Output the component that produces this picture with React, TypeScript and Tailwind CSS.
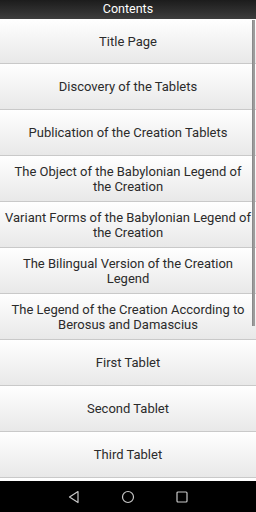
import React from "react";

const items = [
  "Title Page",
  "Discovery of the Tablets",
  "Publication of the Creation Tablets",
  "The Object of the Babylonian Legend of the Creation",
  "Variant Forms of the Babylonian Legend of the Creation",
  "The Bilingual Version of the Creation Legend",
  "The Legend of the Creation According to Berosus and Damascius",
  "First Tablet",
  "Second Tablet",
  "Third Tablet",
  "Fourth Tablet",
];

export default function App() {
  return (
    <div className="w-[256px] h-[512px] flex flex-col bg-white overflow-hidden font-['Roboto',sans-serif]">
      {/* Header */}
      <div className="h-[19px] shrink-0 flex items-center justify-center bg-gradient-to-b from-[#1c1c1c] to-[#3e3e3e] text-white text-[12.5px] font-normal leading-none">
        Contents
      </div>

      {/* List */}
      <div className="relative flex-1 overflow-hidden">
        {items.map((t, i) => (
          <div
            key={t}
            className={
              (i === 0 ? "h-[45px] " : "h-[46px] ") +
              "flex items-center justify-center px-1 border-b border-[#c9c9c9] bg-gradient-to-b from-white to-[#e8e8e8] text-center text-[13px] leading-[15px] text-[#2b2b2b]"
            }
          >
            {t}
          </div>
        ))}
        <div className="absolute right-[1px] top-[1px] w-[3px] h-[306px] bg-[#9c9c9c] border-l border-[#8a8a8a]" />
      </div>

      {/* Nav bar */}
      <div className="h-[31px] shrink-0 bg-black flex items-center justify-center gap-[40px]">
        <svg width="14" height="14" viewBox="0 0 14 14" fill="none" stroke="#c8c8c8" strokeWidth="1.2">
          <path d="M11 1.5 L2.5 7 L11 12.5 Z" strokeLinejoin="round" />
        </svg>
        <svg width="14" height="14" viewBox="0 0 14 14" fill="none" stroke="#c8c8c8" strokeWidth="1.2">
          <circle cx="7" cy="7" r="5.5" />
        </svg>
        <svg width="14" height="14" viewBox="0 0 14 14" fill="none" stroke="#c8c8c8" strokeWidth="1.2">
          <rect x="2" y="2" width="10" height="10" rx="1" />
        </svg>
      </div>
    </div>
  );
}
